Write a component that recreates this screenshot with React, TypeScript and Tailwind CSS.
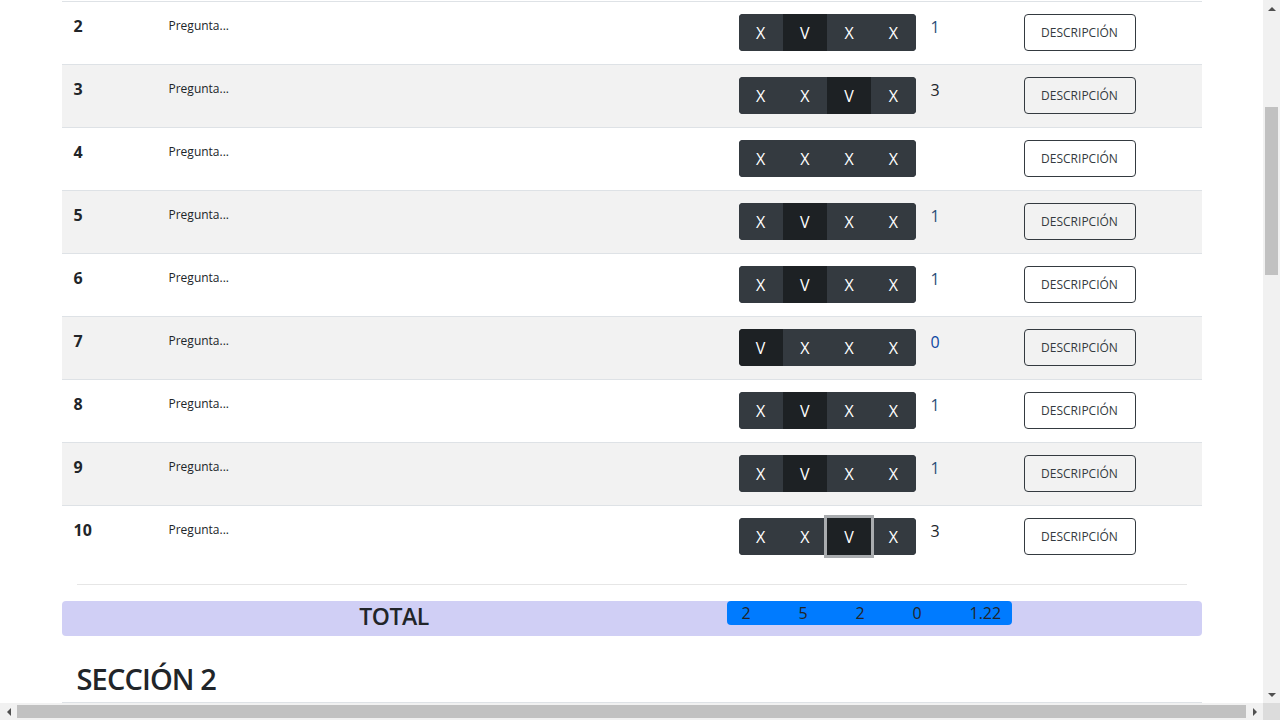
import React from 'react';

type Row = { n: number; picks: boolean[]; score: string; focused?: boolean };

const rows: Row[] = [
  { n: 2, picks: [false, true, false, false], score: '1' },
  { n: 3, picks: [false, false, true, false], score: '3' },
  { n: 4, picks: [false, false, false, false], score: '' },
  { n: 5, picks: [false, true, false, false], score: '1' },
  { n: 6, picks: [false, true, false, false], score: '1' },
  { n: 7, picks: [true, false, false, false], score: '0' },
  { n: 8, picks: [false, true, false, false], score: '1' },
  { n: 9, picks: [false, true, false, false], score: '1' },
  { n: 10, picks: [false, false, true, false], score: '3', focused: true },
];

const totals = ['2', '5', '2', '0', '1.22'];

const scoreColor: Record<string, string> = {
  '0': 'text-[#0d47a1]',
  '1': 'text-[#2a4d78]',
  '3': 'text-[#212529]',
};

const OptionGroup: React.FC<{ picks: boolean[]; focused?: boolean }> = ({ picks, focused }) => (
  <div className="flex h-[37px] w-[177px] rounded bg-[#343a40]">
    {picks.map((on, i) => (
      <button
        key={i}
        className={
          'flex-1 flex items-center justify-center text-white text-base ' +
          (i === 0 ? 'rounded-l ' : '') +
          (i === 3 ? 'rounded-r ' : '') +
          (on ? 'bg-[#1d2124] ' : 'bg-[#343a40] ') +
          (on && focused ? 'ring-[3px] ring-[#a9acaf] relative z-10' : '')
        }
      >
        {on ? 'V' : 'X'}
      </button>
    ))}
  </div>
);

const QuestionRow: React.FC<{ row: Row; striped: boolean }> = ({ row, striped }) => (
  <div
    className={
      'grid grid-cols-[95px_570px_192px_93px_190px] h-[63px] border-t border-[#dee2e6] ' +
      (striped ? 'bg-[#f2f2f2]' : 'bg-white')
    }
  >
    <div className="pl-3 pt-3 font-bold text-base leading-6 text-[#212529]">{row.n}</div>
    <div className="pl-3 pt-[14px] text-[12px] leading-5 text-[#212529]">Pregunta...</div>
    <div className="pl-3 pt-3">
      <OptionGroup picks={row.picks} focused={row.focused} />
    </div>
    <div className={'pl-3 pt-[13px] text-base leading-6 ' + (scoreColor[row.score] ?? '')}>{row.score}</div>
    <div className="pl-3 pt-3">
      <button className="h-[37px] w-[112px] rounded border border-[#343a40] pt-px text-[12px] text-[#343a40]">
        DESCRIPCIÓN
      </button>
    </div>
  </div>
);

const Arrow: React.FC<{ dir: 'up' | 'down' | 'left' | 'right' }> = ({ dir }) => {
  const pts = {
    up: '0,5 4,1 8,5',
    down: '0,1 4,5 8,1',
    left: '5,0 1,4 5,8',
    right: '1,0 5,4 1,8',
  }[dir];
  const size = dir === 'up' || dir === 'down' ? 'w-2 h-[6px]' : 'w-[6px] h-2';
  const vb = dir === 'up' || dir === 'down' ? '0 0 8 6' : '0 0 6 8';
  return (
    <svg viewBox={vb} className={size}>
      <polygon points={pts} fill="#505050" />
    </svg>
  );
};

const App: React.FC = () => {
  return (
    <div className="h-screen w-screen overflow-hidden flex flex-col bg-white font-['Open_Sans',sans-serif] text-[#212529]">
      <div className="flex flex-1 min-h-0">
        <main className="flex-1 overflow-hidden">
          <div className="mx-auto w-[1140px] pt-px">
            {rows.map((r, i) => (
              <QuestionRow key={r.n} row={r} striped={i % 2 === 1} />
            ))}
            <div className="mx-[15px] mt-4 border-t border-[#e6e6e6]" />
            <div className="mt-4 grid grid-cols-[665px_285px_190px] h-[35px] rounded bg-[#d0cff5]">
              <div className="text-center text-[23px] font-semibold tracking-[-0.02em] leading-[31px] text-[#212529]">TOTAL</div>
              <div className="flex h-6 rounded bg-[#007bff] text-base leading-6 text-[#212529]">
                {totals.map((t, i) => (
                  <span key={i} className="w-[57px] shrink-0 pl-[15px]">{t}</span>
                ))}
              </div>
              <div />
            </div>
            <h2 className="mt-[24px] pl-[15px] text-[29px] font-semibold tracking-[-0.03em] leading-[38px] text-[#212529]">SECCIÓN 2</h2>
            <div className="mt-[4px] border-t border-[#dee2e6]" />
          </div>
        </main>
        <div className="w-[17px] bg-[#f1f1f1] flex flex-col items-center">
          <div className="h-[17px] flex items-center justify-center">
            <Arrow dir="up" />
          </div>
          <div className="flex-1 w-full px-[2px]">
            <div className="mt-[90px] h-[168px] bg-[#c1c1c1]" />
          </div>
          <div className="h-[17px] flex items-center justify-center">
            <Arrow dir="down" />
          </div>
        </div>
      </div>
      <div className="h-[17px] flex bg-[#f1f1f1]">
        <div className="w-[17px] flex items-center justify-center">
          <Arrow dir="left" />
        </div>
        <div className="flex-1 py-[2px]">
          <div className="h-full bg-[#c1c1c1]" />
        </div>
        <div className="w-[17px] flex items-center justify-center">
          <Arrow dir="right" />
        </div>
        <div className="w-[17px] bg-[#dcdcdc]" />
      </div>
    </div>
  );
};

export default App;
